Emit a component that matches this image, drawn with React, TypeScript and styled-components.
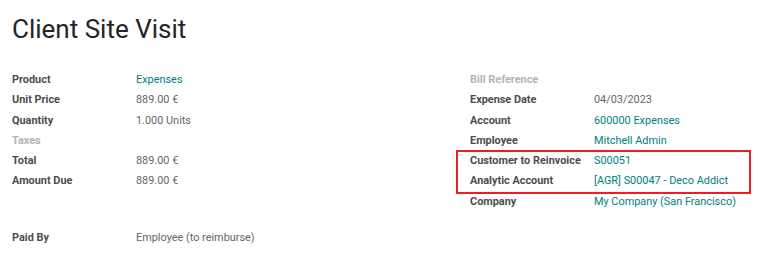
import styled, { createGlobalStyle } from "styled-components"

const GlobalStyle = createGlobalStyle`
  body {
    margin: 0;
    background: #ffffff;
    font-family: Roboto, "Liberation Sans", sans-serif;
  }
`

const Sheet = styled.div`
  width: 768px;
  height: 271px;
  box-sizing: border-box;
  padding: 14px 0 0 12px;
  overflow: hidden;
  background: #ffffff;
`

const Title = styled.h1`
  margin: 0;
  font-size: 26px;
  line-height: 31px;
  font-weight: 400;
  color: #212529;
`

const Groups = styled.div`
  display: grid;
  grid-template-columns: 458px 1fr;
  margin-top: 25px;
`

const Group = styled.div`
  display: flex;
  flex-direction: column;
`

const Field = styled.div`
  display: grid;
  grid-template-columns: 124px 1fr;
  height: 20.25px;
  align-items: center;
  font-size: 10.9px;
  line-height: 20.25px;
  white-space: nowrap;
`

const Label = styled.span<{ $muted?: boolean }>`
  font-weight: 700;
  color: ${(p) => (p.$muted ? "#b4b4b4" : "#4c4c4c")};
`

const Value = styled.span<{ $link?: boolean }>`
  color: ${(p) => (p.$link ? "#017e84" : "#666666")};
`

const Highlight = styled.div`
  position: relative;
  display: flex;
  flex-direction: column;

  &::after {
    content: "";
    position: absolute;
    top: -1px;
    bottom: -2px;
    left: -14px;
    right: 17px;
    border: 2px solid #ee1c24;
    pointer-events: none;
  }
`

const Footer = styled.div`
  margin-top: 16px;
`

type Row = { label: string; value?: string; link?: boolean; muted?: boolean }

const left: Row[] = [
  { label: "Product", value: "Expenses", link: true },
  { label: "Unit Price", value: "889.00 €" },
  { label: "Quantity", value: "1.000 Units" },
  { label: "Taxes", muted: true },
  { label: "Total", value: "889.00 €" },
  { label: "Amount Due", value: "889.00 €" },
]

const rightTop: Row[] = [
  { label: "Bill Reference", muted: true },
  { label: "Expense Date", value: "04/03/2023" },
  { label: "Account", value: "600000 Expenses", link: true },
  { label: "Employee", value: "Mitchell Admin", link: true },
]

const rightMarked: Row[] = [
  { label: "Customer to Reinvoice", value: "S00051", link: true },
  { label: "Analytic Account", value: "[AGR] S00047 - Deco Addict", link: true },
]

function FieldRow({ row }: { row: Row }) {
  return (
    <Field>
      <Label $muted={row.muted}>{row.label}</Label>
      <Value $link={row.link}>{row.value}</Value>
    </Field>
  )
}

export default function App() {
  return (
    <Sheet>
      <GlobalStyle />
      <Title>Client Site Visit</Title>
      <Groups>
        <Group>
          {left.map((r) => (
            <FieldRow key={r.label} row={r} />
          ))}
        </Group>
        <Group>
          {rightTop.map((r) => (
            <FieldRow key={r.label} row={r} />
          ))}
          <Highlight>
            {rightMarked.map((r) => (
              <FieldRow key={r.label} row={r} />
            ))}
          </Highlight>
          <FieldRow row={{ label: "Company", value: "My Company (San Francisco)", link: true }} />
        </Group>
      </Groups>
      <Footer>
        <FieldRow row={{ label: "Paid By", value: "Employee (to reimburse)" }} />
      </Footer>
    </Sheet>
  )
}
